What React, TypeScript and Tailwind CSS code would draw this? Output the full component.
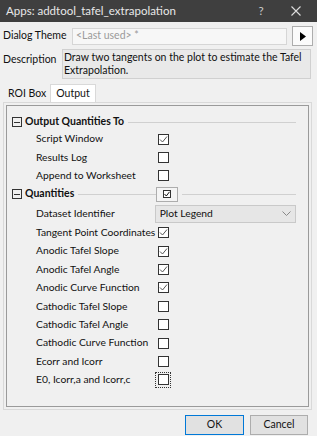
import { ReactNode } from "react";

const font = { fontFamily: 'Lato, "Noto Sans", sans-serif' };

const CheckBox = ({ checked, focus }: { checked?: boolean; focus?: boolean }) => (
  <div
    className={`flex items-center justify-center w-[12px] h-[12px] ${
      focus ? "outline-1 outline-dotted outline-[#333] outline-offset-1" : ""
    }`}
  >
    <div className="w-[11px] h-[11px] border border-[#333] bg-white flex items-center justify-center">
      {checked && (
        <svg width="9" height="9" viewBox="0 0 9 9">
          <path d="M1 4.5 L3.5 7 L8 1.5" fill="none" stroke="#555" strokeWidth="1" />
        </svg>
      )}
    </div>
  </div>
);

const Collapse = () => (
  <div className="w-[10px] h-[10px] border border-[#333] flex items-center justify-center mr-[3px]">
    <div className="w-[6px] h-px bg-[#333]" />
  </div>
);

const Row = ({ label, tall, children }: { label: string; tall?: boolean; children?: ReactNode }) => (
  <div className={`flex items-center ${tall ? "h-[20px]" : "h-[18.4px]"}`}>
    <div className="w-[150px] pl-[29px] text-[10.3px] text-[#111] whitespace-nowrap">{label}</div>
    {children}
  </div>
);

const Header = ({ label, first, children }: { label: string; first?: boolean; children?: ReactNode }) => (
  <div className={`flex items-center pl-[5px] ${first ? "h-[16px]" : "h-[18.4px]"}`}>
    <Collapse />
    <span className="text-[10.5px] font-bold text-[#111] mr-[4px] whitespace-nowrap">{label}</span>
    {children}
  </div>
);

const outputRows = [
  { label: "Tangent Point Coordinates", checked: true },
  { label: "Anodic Tafel Slope", checked: true },
  { label: "Anodic Tafel Angle", checked: true },
  { label: "Anodic Curve Function", checked: true },
  { label: "Cathodic Tafel Slope", checked: false },
  { label: "Cathodic Tafel Angle", checked: false },
  { label: "Cathodic Curve Function", checked: false },
  { label: "Ecorr and Icorr", checked: false },
];

export default function App() {
  return (
    <div className="w-[317px] h-[436px] bg-[#f0f0f0] flex flex-col overflow-hidden" style={font}>
      {/* Title bar */}
      <div className="h-[22px] bg-[#3f3f3f] flex items-center pl-[6px] text-[11.5px] text-[#e8e8e8]">
        <span className="flex-1">Apps: addtool_tafel_extrapolation</span>
        <span className="w-[20px] text-center mr-[20px] text-[#ccc]">?</span>
        <svg width="10" height="10" viewBox="0 0 10 10" className="mr-[16px]">
          <path d="M0.5 0.5 L9.5 9.5 M9.5 0.5 L0.5 9.5" stroke="#ddd" strokeWidth="1.1" />
        </svg>
      </div>

      {/* Dialog theme */}
      <div className="flex items-center mt-[4px] h-[20px]">
        <span className="w-[72px] pl-[3px] text-[10.5px] text-[#111] whitespace-nowrap">Dialog Theme</span>
        <div className="w-[215px] h-[17px] border border-[#d6d6d6] bg-[#f7f7f7] flex items-center pl-[3px] text-[10.5px] text-[#9a9a9a]">
          &lt;Last used&gt; *
        </div>
        <div className="ml-[5px] w-[21px] h-[20px] border border-[#adadad] bg-[#fbfbfb] flex items-center justify-center">
          <svg width="6" height="9" viewBox="0 0 6 9">
            <path d="M0 0 L6 4.5 L0 9 Z" fill="#000" />
          </svg>
        </div>
      </div>

      {/* Description */}
      <div className="flex mt-[3px]">
        <span className="w-[62px] pl-[3px] pt-[3px] text-[10.5px] text-[#111]">Description</span>
        <div className="w-[249px] h-[30px] border border-[#d0d0d0] bg-[#e9e9e9] pl-[1px] pt-px text-[10.5px] leading-[13px] text-[#111]">
          Draw two tangents on the plot to estimate the Tafel Extrapolation.
        </div>
      </div>

      {/* Tabs */}
      <div className="flex items-end mt-[5px] pl-[4px] h-[18px]">
        <div className="h-[17px] px-[4px] text-[10.5px] text-[#111] flex items-center">ROI Box</div>
        <div className="h-[18px] px-[5px] bg-white border border-b-0 border-[#d9d9d9] text-[10.5px] text-[#111] flex items-center">
          Output
        </div>
      </div>

      {/* Panel */}
      <div className="ml-[3px] w-[309px] h-[308px] border border-[#d9d9d9] bg-[#f0f0f0] p-[2px]">
        <div className="h-full border border-[#9a9a9a] pt-[8px] pr-[12px]">
          <Header label="Output Quantities To" first>
            <div className="flex-1 h-px bg-[#d0d0d0]" />
          </Header>
          <Row label="Script Window">
            <CheckBox checked />
          </Row>
          <Row label="Results Log">
            <CheckBox />
          </Row>
          <Row label="Append to Worksheet">
            <CheckBox />
          </Row>
          <Header label="Quantities">
            <div className="w-[78px] h-px bg-[#d0d0d0]" />
            <div className="w-[22px] h-[15px] border border-[#adadad] bg-[#f4f4f4] flex items-center justify-center">
              <div className="w-[8px] h-[8px] border border-[#333] bg-white flex items-center justify-center">
                <svg width="6" height="6" viewBox="0 0 6 6">
                  <path d="M0.5 3 L2.3 5 L5.5 0.8" fill="none" stroke="#111" strokeWidth="1" />
                </svg>
              </div>
            </div>
            <div className="flex-1 ml-[4px] h-px bg-[#d0d0d0]" />
          </Header>
          <Row label="Dataset Identifier" tall>
            <div className="w-[144px] h-[18px] border border-[#c9c9c9] bg-[#e6e6e6] flex items-center pl-[4px] pr-[4px] text-[10.3px] text-[#111]">
              <span className="flex-1">Plot Legend</span>
              <svg width="9" height="5" viewBox="0 0 9 5">
                <path d="M0.5 0.5 L4.5 4.5 L8.5 0.5" fill="none" stroke="#888" strokeWidth="1" />
              </svg>
            </div>
          </Row>
          {outputRows.map((r) => (
            <Row key={r.label} label={r.label}>
              <CheckBox checked={r.checked} />
            </Row>
          ))}
          <Row label="E0, Icorr,a and Icorr,c">
            <CheckBox focus />
          </Row>
        </div>
      </div>

      {/* Buttons */}
      <div className="flex justify-end gap-[6px] mt-[5px] pr-[9px]">
        <button className="w-[59px] h-[20px] border border-[#0078d7] bg-[#e1e1e1] text-[10.5px] text-[#111]">
          OK
        </button>
        <button className="w-[58px] h-[20px] border border-[#adadad] bg-[#e1e1e1] text-[10.5px] text-[#111]">
          Cancel
        </button>
      </div>
    </div>
  );
}
